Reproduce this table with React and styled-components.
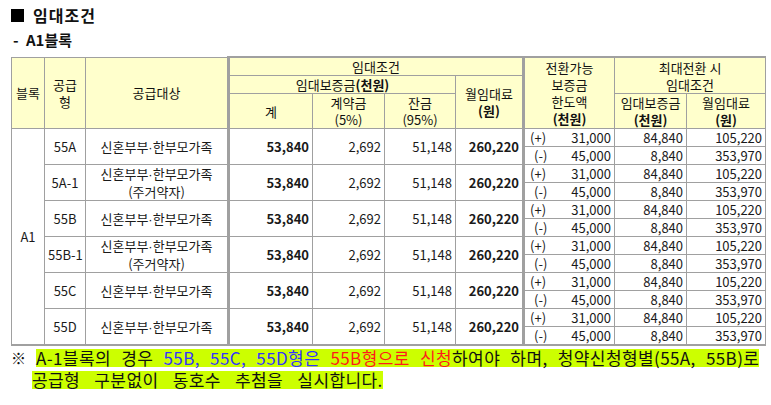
import React from "react";
import styled, { createGlobalStyle } from "styled-components";

const Global = createGlobalStyle`
  html, body { margin: 0; padding: 0; background: #fff; }
  body { font-family: "Noto Sans CJK KR", "Malgun Gothic", sans-serif; color: #111; }
`;

const Page = styled.div`
  width: 771px;
  height: 405px;
  padding: 5px 0 0 11px;
  box-sizing: border-box;
  overflow: hidden;
`;

const Title = styled.div`
  font-size: 16px;
  font-weight: 700;
  line-height: 20px;
  letter-spacing: 1px;
  display: flex;
  align-items: center;
  gap: 9px;
`;

const Square = styled.span`
  display: inline-block;
  width: 13px;
  height: 13px;
  background: #000;
`;

const SubTitle = styled.div`
  font-size: 15px;
  font-weight: 700;
  line-height: 22px;
  margin-top: 4px;
  padding-left: 2px;
  word-spacing: 4px;
`;

const Table = styled.table`
  margin-top: 5px;
  border-collapse: collapse;
  table-layout: fixed;
  width: 754px;
  font-size: 13px;
  line-height: 17px;
`;

const Th = styled.th`
  background: #ffffcc;
  border: 1px solid #a0a0a0;
  font-weight: 400;
  padding: 0;
  text-align: center;
  vertical-align: middle;
  color: #111;
  ${(p) => p.$thickLeft && `border-left: 3px solid #a0a0a0;`}
  ${(p) => p.$thickTop && `border-top: 2px solid #a0a0a0;`}
  ${(p) => p.$thickRight && `border-right: 3px solid #a0a0a0;`}
`;

const Td = styled.td`
  border: 1px solid #a0a0a0;
  padding: 0 3px;
  text-align: ${(p) => p.$align || "center"};
  vertical-align: middle;
  font-weight: ${(p) => (p.$bold ? 700 : 400)};
  color: #1a1a1a;
  white-space: nowrap;
  ${(p) => p.$thickLeft && `border-left: 3px solid #a0a0a0;`}
  ${(p) => p.$thickRight && `border-right: 3px solid #a0a0a0;`}
  ${(p) => p.$thickBottom && `border-bottom: 2px solid #a0a0a0;`}
`;

const Row = styled.tr`
  height: ${(p) => p.$h}px;
`;

const B = styled.b`
  font-weight: 700;
`;

const Dot = styled.span`
  font-family: "Liberation Sans", sans-serif;
`;

const SignCell = styled.div`
  display: flex;
  justify-content: space-between;
  align-items: center;
  line-height: 17px;
`;

const Sign = styled.span`
  padding-left: ${(p) => (p.$minus ? 6 : 2)}px;
`;

const Note = styled.div`
  margin-top: -2px;
  font-size: 17px;
  line-height: 27px;
  color: #111;
`;

const NoteLine = styled.div`
  display: flex;
  align-items: center;
  white-space: nowrap;
  padding-left: ${(p) => p.$indent || 0}px;
`;

const Mark = styled.span`
  width: 25px;
  font-size: 15px;
  display: inline-block;
`;

const Hl = styled.span`
  background: #ccff00;
  word-spacing: ${(p) => p.$ws}px;
  letter-spacing: 0.4px;
  line-height: 18px;
`;

const Blue = styled.span`
  color: #3333ff;
`;
const Red = styled.span`
  color: #ff1a1a;
`;

const groups = [
  { type: "55A", sub: null },
  { type: "5A-1", sub: "(주거약자)" },
  { type: "55B", sub: null },
  { type: "55B-1", sub: "(주거약자)" },
  { type: "55C", sub: null },
  { type: "55D", sub: null },
];

export default function App() {
  return (
    <>
      <Global />
      <Page>
        <Title>
          <Square />
          <span>임대조건</span>
        </Title>
        <SubTitle>- A1블록</SubTitle>
        <Table>
          <colgroup>
            <col style={{ width: 33 }} />
            <col style={{ width: 41 }} />
            <col style={{ width: 143 }} />
            <col style={{ width: 84 }} />
            <col style={{ width: 72 }} />
            <col style={{ width: 71 }} />
            <col style={{ width: 68 }} />
            <col style={{ width: 91 }} />
            <col style={{ width: 72 }} />
            <col style={{ width: 79 }} />
          </colgroup>
          <thead>
            <Row $h={17}>
              <Th rowSpan={3}>블록</Th>
              <Th rowSpan={3}>
                공급
                <br />형
              </Th>
              <Th rowSpan={3}>공급대상</Th>
              <Th colSpan={4} $thickLeft $thickTop $thickRight>
                임대조건
              </Th>
              <Th rowSpan={3} $thickTop $thickLeft>
                전환가능
                <br />
                보증금
                <br />
                한도액
                <br />
                <B>(천원)</B>
              </Th>
              <Th colSpan={2} rowSpan={2} $thickTop>
                최대전환 시
                <br />
                임대조건
              </Th>
            </Row>
            <Row $h={17}>
              <Th colSpan={3} $thickLeft>
                임대보증금<B>(천원)</B>
              </Th>
              <Th rowSpan={2} $thickRight>
                월임대료
                <br />
                <B>(원)</B>
              </Th>
            </Row>
            <Row $h={35}>
              <Th $thickLeft>계</Th>
              <Th>
                계약금
                <br />
                (5%)
              </Th>
              <Th>
                잔금
                <br />
                (95%)
              </Th>
              <Th>
                임대보증금
                <br />
                <B>(천원)</B>
              </Th>
              <Th>
                월임대료
                <br />
                <B>(원)</B>
              </Th>
            </Row>
          </thead>
          <tbody>
            {groups.map((g, i) => {
              const last = i === groups.length - 1;
              return (
                <React.Fragment key={g.type}>
                  <Row $h={18}>
                    {i === 0 && (
                      <Td rowSpan={12} $thickBottom>
                        A1
                      </Td>
                    )}
                    <Td rowSpan={2} $thickBottom={last}>
                      {g.type}
                    </Td>
                    <Td rowSpan={2} $thickBottom={last}>
                      <div>
                        신혼부부<Dot>·</Dot>한부모가족
                      </div>
                      {g.sub && <div>{g.sub}</div>}
                    </Td>
                    <Td rowSpan={2} $align="right" $bold $thickLeft $thickBottom={last}>
                      53,840
                    </Td>
                    <Td rowSpan={2} $align="right" $thickBottom={last}>
                      2,692
                    </Td>
                    <Td rowSpan={2} $align="right" $thickBottom={last}>
                      51,148
                    </Td>
                    <Td rowSpan={2} $align="right" $bold $thickRight $thickBottom={last}>
                      260,220
                    </Td>
                    <Td $align="right">
                      <SignCell>
                        <Sign>(+)</Sign>
                        <span>31,000</span>
                      </SignCell>
                    </Td>
                    <Td $align="right">84,840</Td>
                    <Td $align="right">105,220</Td>
                  </Row>
                  <Row $h={18}>
                    <Td $align="right" $thickBottom={last}>
                      <SignCell>
                        <Sign $minus>(-)</Sign>
                        <span>45,000</span>
                      </SignCell>
                    </Td>
                    <Td $align="right" $thickBottom={last}>
                      8,840
                    </Td>
                    <Td $align="right" $thickBottom={last}>
                      353,970
                    </Td>
                  </Row>
                </React.Fragment>
              );
            })}
          </tbody>
        </Table>
        <Note>
          <NoteLine>
            <Mark>※</Mark>
            <Hl $ws={6}>
              A-1블록의 경우 <Blue>55B, 55C, 55D형은</Blue> <Red>55B형으로 신청</Red>하여야 하며,
              청약신청형별(55A, 55B)로
            </Hl>
          </NoteLine>
          <NoteLine $indent={21}>
            <Hl $ws={10}>공급형 구분없이 동호수 추첨을 실시합니다.</Hl>
          </NoteLine>
        </Note>
      </Page>
    </>
  );
}
